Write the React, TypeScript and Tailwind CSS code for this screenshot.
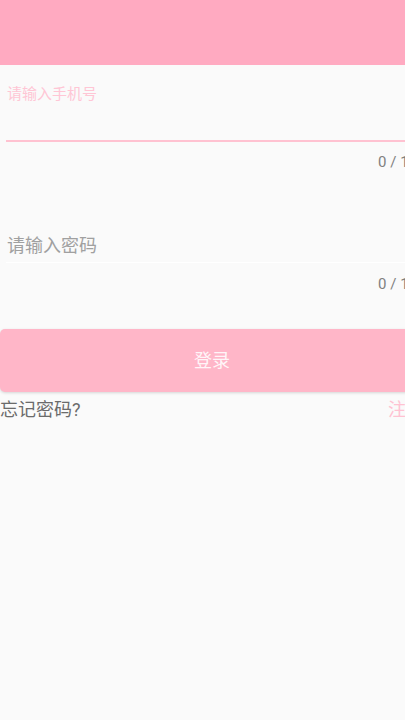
import React from "react";

export default function App() {
  const font = { fontFamily: 'Roboto, "Noto Sans CJK SC", sans-serif' };
  return (
    <div className="w-[405px] h-[720px] overflow-hidden bg-[#fafafa]" style={font}>
      <div className="w-[424px]">
        <div className="h-[65px] bg-[#ffaac1]" />
        <div className="mt-[19px] pl-[7px] text-[15px] leading-[20px] text-[#ffc6d5]">请输入手机号</div>
        <div className="ml-[6px] h-[38px] border-b-2 border-[#ffc2d1]" />
        <div className="mt-[10px] pr-[7px] text-right text-[15px] leading-[20px] text-[#808080]">0 / 11</div>
        <div className="mt-[62px] ml-[6px] border-b border-white">
          <div className="pl-[1px] pb-[4px] text-[18px] leading-[24px] text-[#a0a0a0]">请输入密码</div>
        </div>
        <div className="mt-[11px] pr-[7px] text-right text-[15px] leading-[20px] text-[#808080]">0 / 16</div>
        <button className="mt-[35px] w-full h-[63px] rounded-[5px] bg-[#ffb6c8] shadow-[0_1px_3px_rgba(0,0,0,0.15)] text-[18px] text-[#fff5f8] flex items-center justify-center">
          登录
        </button>
        <div className="mt-[6px] flex justify-between text-[18px] leading-[24px]">
          <span className="text-[#6b6b6b]">忘记密码?</span>
          <span className="text-[#ffc2d2]">注册</span>
        </div>
      </div>
    </div>
  );
}
